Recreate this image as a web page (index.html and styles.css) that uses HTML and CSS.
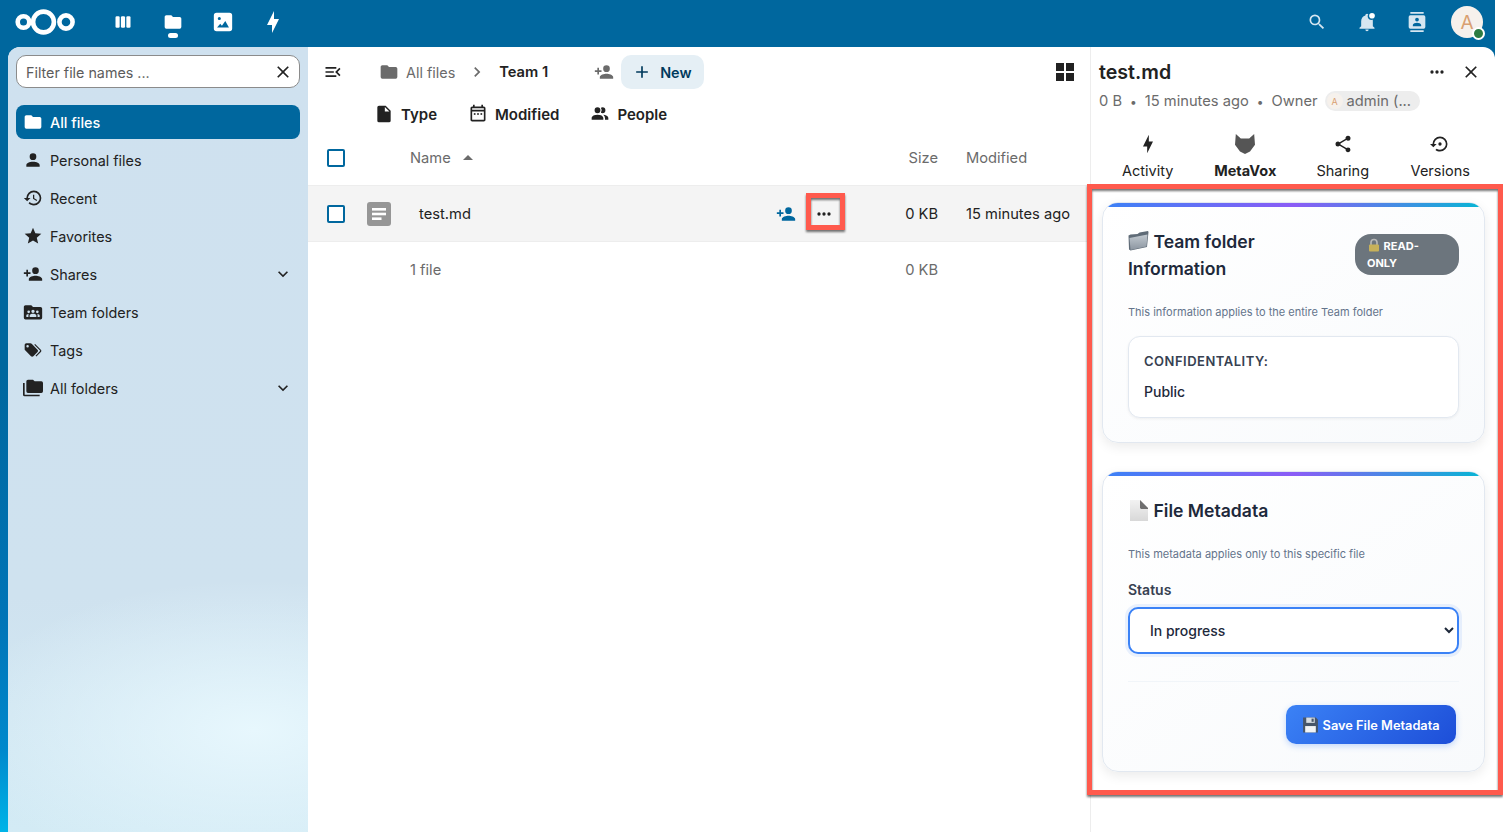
FILE: index.html
```html
<!DOCTYPE html>
<html lang="en">
<head>
<meta charset="utf-8">
<title>Files - Nextcloud</title>
<link rel="stylesheet" href="styles.css">
</head>
<body>
<svg class="sprite" aria-hidden="true">
  <defs>
    <linearGradient id="g-folder" x1="0" y1="0" x2="0" y2="1"><stop offset="0" stop-color="#c2c9d0"/><stop offset="1" stop-color="#8b95a0"/></linearGradient>
    <linearGradient id="g-file" x1="0" y1="0" x2="0" y2="1"><stop offset="0" stop-color="#f2f2f2"/><stop offset="1" stop-color="#d8d8d8"/></linearGradient>
  </defs>
  <symbol id="i-folder" viewBox="0 0 24 24"><path d="M10,4H4C2.89,4 2,4.89 2,6V18A2,2 0 0,0 4,20H20A2,2 0 0,0 22,18V8C22,6.89 21.1,6 20,6H12L10,4Z"/></symbol>
  <symbol id="i-account" viewBox="0 0 24 24"><path d="M12,4A4,4 0 0,1 16,8A4,4 0 0,1 12,12A4,4 0 0,1 8,8A4,4 0 0,1 12,4M12,14C16.42,14 20,15.79 20,18V20H4V18C4,15.79 7.58,14 12,14Z"/></symbol>
  <symbol id="i-history" viewBox="0 0 24 24"><path d="M13.5,8H12V13L16.28,15.54L17,14.33L13.5,12.25V8M13,3A9,9 0 0,0 4,12H1L4.96,16.03L9,12H6A7,7 0 0,1 13,5A7,7 0 0,1 20,12A7,7 0 0,1 13,19C11.07,19 9.32,18.21 8.06,16.94L6.64,18.36C8.27,20 10.5,21 13,21A9,9 0 0,0 22,12A9,9 0 0,0 13,3"/></symbol>
  <symbol id="i-star" viewBox="0 0 24 24"><path d="M12,17.27L18.18,21L16.54,13.97L22,9.24L14.81,8.62L12,2L9.19,8.62L2,9.24L7.45,13.97L5.82,21L12,17.27Z"/></symbol>
  <symbol id="i-share-plus" viewBox="0 0 24 24"><path d="M15,14C12.33,14 7,15.33 7,18V20H23V18C23,15.33 17.67,14 15,14M6,10V7H4V10H1V12H4V15H6V12H9V10M15,12A4,4 0 0,0 19,8A4,4 0 0,0 15,4A4,4 0 0,0 11,8A4,4 0 0,0 15,12Z"/></symbol>
  <symbol id="i-team" viewBox="0 0 24 24"><path fill-rule="evenodd" d="M10,4H3C1.9,4 1,4.9 1,6V19A2,2 0 0,0 3,21H21A2,2 0 0,0 23,19V8C23,6.9 22.1,6 21,6H12L10,4ZM12,9.2A2,2 0 1,1 12,13.2A2,2 0 1,1 12,9.2ZM6.8,10.2A1.6,1.6 0 1,1 6.8,13.4A1.6,1.6 0 1,1 6.8,10.2ZM17.2,10.2A1.6,1.6 0 1,1 17.2,13.4A1.6,1.6 0 1,1 17.2,10.2ZM8,18V16C8,14.8 10,14 12,14C14,14 16,14.8 16,16V18ZM4,18V16C4,15 5.2,14.4 6.8,14.3C6.6,14.8 6.5,15.4 6.5,16V18ZM20,18H17.5V16C17.5,15.4 17.4,14.8 17.2,14.3C18.8,14.4 20,15 20,16Z"/></symbol>
  <symbol id="i-tags" viewBox="0 0 24 24"><path d="M5.5,9A1.5,1.5 0 0,0 7,7.5A1.5,1.5 0 0,0 5.5,6A1.5,1.5 0 0,0 4,7.5A1.5,1.5 0 0,0 5.5,9M17.41,11.58C17.77,11.94 18,12.44 18,13C18,13.55 17.78,14.05 17.41,14.41L12.41,19.41C12.05,19.77 11.55,20 11,20C10.45,20 9.95,19.78 9.58,19.41L2.59,12.42C2.22,12.05 2,11.55 2,11V6C2,4.89 2.89,4 4,4H9C9.55,4 10.05,4.22 10.41,4.58L17.41,11.58M13.54,5.71L14.54,4.71L21.41,11.58C21.78,11.94 22,12.45 22,13C22,13.55 21.78,14.05 21.42,14.41L16.04,19.79L15.04,18.79L20.75,13L13.54,5.71Z"/></symbol>
  <symbol id="i-folders" viewBox="0 0 24 24"><path d="M22,4H14L12,2H6A2,2 0 0,0 4,4V16A2,2 0 0,0 6,18H22A2,2 0 0,0 24,16V6A2,2 0 0,0 22,4M2,6H0V20A2,2 0 0,0 2,22H20V20H2V6Z"/></symbol>
  <symbol id="i-chevron-down" viewBox="0 0 24 24"><path d="M7.41,8.58L12,13.17L16.59,8.58L18,10L12,16L6,10L7.41,8.58Z"/></symbol>
  <symbol id="i-chevron-right" viewBox="0 0 24 24"><path d="M8.59,16.58L13.17,12L8.59,7.41L10,6L16,12L10,18L8.59,16.58Z"/></symbol>
  <symbol id="i-close" viewBox="0 0 24 24"><path d="M19,6.41L17.59,5L12,10.59L6.41,5L5,6.41L10.59,12L5,17.59L6.41,19L12,13.41L17.59,19L19,17.59L13.41,12L19,6.41Z"/></symbol>
  <symbol id="i-flash" viewBox="0 0 24 24"><path d="M11 15H6L13 1V9H18L11 23V15Z"/></symbol>
  <symbol id="i-dots" viewBox="0 0 24 24"><path d="M16,12A2,2 0 0,1 18,10A2,2 0 0,1 20,12A2,2 0 0,1 18,14A2,2 0 0,1 16,12M10,12A2,2 0 0,1 12,10A2,2 0 0,1 14,12A2,2 0 0,1 12,14A2,2 0 0,1 10,12M4,12A2,2 0 0,1 6,10A2,2 0 0,1 8,12A2,2 0 0,1 6,14A2,2 0 0,1 4,12Z"/></symbol>
</svg>

<div class="app">
  <header class="topbar">
    <div class="topbar-left">
      <svg class="logo" viewBox="0 0 62 32"><g fill="none" stroke="#fff" stroke-width="4.6"><circle cx="9.5" cy="16" r="5.8"/><circle cx="29.5" cy="16" r="10.4"/><circle cx="52" cy="16" r="6.6"/></g></svg>
      <nav class="apps">
        <a class="app-item"><svg class="ic20 white" viewBox="0 0 24 24"><rect x="3" y="5" width="5" height="14" rx="1.5"/><rect x="9.5" y="5" width="5" height="14" rx="1.5"/><rect x="16" y="5" width="5" height="14" rx="1.5"/></svg></a>
        <a class="app-item app-active"><svg class="ic20 white"><use href="#i-folder"/></svg></a>
        <a class="app-item"><svg class="ic22 white" viewBox="0 0 24 24"><path fill-rule="evenodd" d="M5,2H19A3,3 0 0,1 22,5V19A3,3 0 0,1 19,22H5A3,3 0 0,1 2,19V5A3,3 0 0,1 5,2ZM8,6.5A1.7,1.7 0 1,0 8,9.9A1.7,1.7 0 1,0 8,6.5ZM14.5,11L10.8,16L9,13.8L5.5,18H18.5Z"/></svg></a>
        <a class="app-item"><svg class="ic24 white"><use href="#i-flash"/></svg></a>
      </nav>
    </div>
    <div class="topbar-right">
      <a class="app-item"><svg class="ic20 soft" viewBox="0 0 24 24"><path d="M9.5,3A6.5,6.5 0 0,1 16,9.5C16,11.11 15.41,12.59 14.44,13.73L14.71,14H15.5L20.5,19L19,20.5L14,15.5V14.71L13.73,14.44C12.59,15.41 11.11,16 9.5,16A6.5,6.5 0 0,1 3,9.5A6.5,6.5 0 0,1 9.5,3M9.5,5C7,5 5,7 5,9.5C5,12 7,14 9.5,14C12,14 14,12 14,9.5C14,7 12,5 9.5,5Z"/></svg></a>
      <a class="app-item"><svg class="ic20 soft" viewBox="0 0 24 24"><path d="M21,19V20H3V19L5,17V11C5,7.9 7.03,5.17 10,4.29C10,4.19 10,4.1 10,4A2,2 0 0,1 12,2C12.6,2 13.1,2.2 13.5,2.6C13,3.3 12.8,4.1 12.8,5C12.8,7.5 14.9,9.6 17.4,9.6C17.9,9.6 18.4,9.5 18.9,9.4C19,9.9 19,10.4 19,11V17L21,19M14,21A2,2 0 0,1 12,23A2,2 0 0,1 10,21"/><circle cx="18" cy="4.5" r="3.4" fill="#fff"/></svg></a>
      <a class="app-item"><svg class="ic20 soft" viewBox="0 0 24 24"><path d="M20,0H4V2H20V0M4,24H20V22H4V24M20,4H4A2,2 0 0,0 2,6V18A2,2 0 0,0 4,20H20A2,2 0 0,0 22,18V6A2,2 0 0,0 20,4M12,6.75A2.25,2.25 0 0,1 14.25,9A2.25,2.25 0 0,1 12,11.25A2.25,2.25 0 0,1 9.75,9A2.25,2.25 0 0,1 12,6.75M17,17H7V15.5C7,13.83 10.33,13 12,13C13.67,13 17,13.83 17,15.5V17Z"/></svg></a>
      <div class="avatar"><span>A</span><i class="status-dot"></i></div>
    </div>
  </header>

  <div class="workspace">
    <aside class="leftnav">
      <div class="filter">
        <span class="filter-text">Filter file names ...</span>
        <svg class="ic20 dark"><use href="#i-close"/></svg>
      </div>
      <ul class="navlist">
        <li class="navitem active"><svg class="ic20 white"><use href="#i-folder"/></svg><span>All files</span></li>
        <li class="navitem"><svg class="ic20 dark"><use href="#i-account"/></svg><span>Personal files</span></li>
        <li class="navitem"><svg class="ic20 dark"><use href="#i-history"/></svg><span>Recent</span></li>
        <li class="navitem"><svg class="ic20 dark"><use href="#i-star"/></svg><span>Favorites</span></li>
        <li class="navitem"><svg class="ic20 dark"><use href="#i-share-plus"/></svg><span>Shares</span><svg class="ic20 dark chev"><use href="#i-chevron-down"/></svg></li>
        <li class="navitem"><svg class="ic20 dark"><use href="#i-team"/></svg><span>Team folders</span></li>
        <li class="navitem"><svg class="ic20 dark"><use href="#i-tags"/></svg><span>Tags</span></li>
        <li class="navitem"><svg class="ic20 dark"><use href="#i-folders"/></svg><span>All folders</span><svg class="ic20 dark chev"><use href="#i-chevron-down"/></svg></li>
      </ul>
    </aside>

    <main class="files">
      <div class="crumbs">
        <svg class="ic20 dark toggle" viewBox="0 0 24 24"><path d="M21,15.61L19.59,17L14.58,12L19.59,7L21,8.39L17.44,12L21,15.61M3,6H16V8H3V6M3,13V11H13V13H3M3,18V16H16V18H3Z"/></svg>
        <svg class="ic20 gray crumb-folder"><use href="#i-folder"/></svg>
        <span class="crumb-root">All files</span>
        <svg class="ic20 gray crumb-sep"><use href="#i-chevron-right"/></svg>
        <span class="crumb-current">Team 1</span>
        <svg class="ic20 gray crumb-share"><use href="#i-share-plus"/></svg>
        <button class="new-btn"><svg class="ic20 navy" viewBox="0 0 24 24"><path d="M19,13H13V19H11V13H5V11H11V5H13V11H19V13Z"/></svg><span>New</span></button>
        <svg class="ic24 dark grid-toggle" viewBox="0 0 24 24"><path d="M3,11H11V3H3M3,21H11V13H3M13,21H21V13H13M13,3V11H21V3"/></svg>
      </div>
      <div class="filters">
        <span class="chip chip-type"><svg class="ic20 dark" viewBox="0 0 24 24"><path d="M13,9V3.5L18.5,9M6,2C4.89,2 4,2.89 4,4V20A2,2 0 0,0 6,22H18A2,2 0 0,0 20,20V8L14,2H6Z"/></svg>Type</span>
        <span class="chip chip-mod"><svg class="ic20 dark" viewBox="0 0 24 24"><path d="M19 3H18V1H16V3H8V1H6V3H5C3.89 3 3 3.9 3 5V19C3 20.11 3.9 21 5 21H19C20.11 21 21 20.11 21 19V5C21 3.9 20.11 3 19 3M19 19H5V9H19V19M19 7H5V5H19V7Z"/><rect x="7" y="11" width="2" height="2"/><rect x="11" y="11" width="2" height="2"/><rect x="15" y="11" width="2" height="2"/></svg>Modified</span>
        <span class="chip chip-people"><svg class="ic20 dark" viewBox="0 0 24 24"><path d="M16 17V19H2V17S2 13 9 13 16 17 16 17M12.5 7.5A3.5 3.5 0 1 0 9 11A3.5 3.5 0 0 0 12.5 7.5M15.94 13A5.32 5.32 0 0 1 18 17V19H22V17S22 13.37 15.94 13M15 4A3.39 3.39 0 0 0 13.07 4.59A5 5 0 0 1 13.07 10.41A3.39 3.39 0 0 0 15 11A3.5 3.5 0 0 0 15 4Z"/></svg>People</span>
      </div>
      <div class="row row-head">
        <span class="checkbox head-check"></span>
        <span class="col-name head-name">Name<i class="sort-caret"></i></span>
        <span class="col-size">Size</span>
        <span class="col-mod">Modified</span>
      </div>
      <div class="row row-file">
        <span class="checkbox file-check"></span>
        <svg class="file-icon" viewBox="0 0 24 24"><rect width="24" height="24" rx="3" fill="#969696"/><rect x="5" y="6" width="14" height="2.6" fill="#fff"/><rect x="5" y="10.7" width="14" height="2.6" fill="#fff"/><rect x="5" y="15.4" width="9.5" height="2.6" fill="#fff"/></svg>
        <span class="col-name file-name">test.md</span>
        <svg class="ic20 primary action-share"><use href="#i-share-plus"/></svg>
        <svg class="ic20 dark action-dots"><use href="#i-dots"/></svg>
        <span class="col-size strong">0 KB</span>
        <span class="col-mod strong">15 minutes ago</span>
      </div>
      <div class="row row-foot">
        <span class="col-name foot-name">1 file</span>
        <span class="col-size">0 KB</span>
        <span class="col-mod"></span>
      </div>
    </main>

    <aside class="details">
      <div class="details-head">
        <div class="title-row">
          <h2 class="details-title">test.md</h2>
          <svg class="ic20 dark head-dots"><use href="#i-dots"/></svg>
          <svg class="ic20 dark head-close"><use href="#i-close"/></svg>
        </div>
        <div class="meta-row">
          <span>0 B</span><b class="sep">•</b><span>15 minutes ago</span><b class="sep">•</b><span>Owner</span>
          <span class="owner"><i class="owner-avatar">A</i>admin (...</span>
        </div>
        <div class="tabs">
          <div class="tab"><svg class="ic20 dark"><use href="#i-flash"/></svg><span>Activity</span></div>
          <div class="tab tab-active"><svg class="ic20 fox" viewBox="0 0 24 24"><path d="M1,0L7,5.5H17L23,0L24,13L18,21L12,24L6,21L0,13Z"/></svg><span>MetaVox</span></div>
          <div class="tab"><svg class="ic20 dark" viewBox="0 0 24 24"><path d="M18,16.08C17.24,16.08 16.56,16.38 16.04,16.85L8.91,12.7C8.96,12.47 9,12.24 9,12C9,11.76 8.96,11.53 8.91,11.3L15.96,7.19C16.5,7.69 17.21,8 18,8A3,3 0 0,0 21,5A3,3 0 0,0 18,2A3,3 0 0,0 15,5C15,5.24 15.04,5.47 15.09,5.7L8.04,9.81C7.5,9.31 6.79,9 6,9A3,3 0 0,0 3,12A3,3 0 0,0 6,15C6.79,15 7.5,14.69 8.04,14.19L15.16,18.34C15.11,18.55 15.08,18.77 15.08,19C15.08,20.61 16.39,21.91 18,21.91C19.61,21.91 20.92,20.61 20.92,19A2.92,2.92 0 0,0 18,16.08Z"/></svg><span>Sharing</span></div>
          <div class="tab"><svg class="ic20 dark" viewBox="0 0 24 24"><path d="M12,3A9,9 0 0,0 3,12H0L4,16L8,12H5A7,7 0 0,1 12,5A7,7 0 0,1 19,12A7,7 0 0,1 12,19C10.5,19 9.09,18.5 7.94,17.7L6.5,19.14C8.04,20.3 9.94,21 12,21A9,9 0 0,0 21,12A9,9 0 0,0 12,3M14,12A2,2 0 0,0 12,10A2,2 0 0,0 10,12A2,2 0 0,0 12,14A2,2 0 0,0 14,12Z"/></svg><span>Versions</span></div>
        </div>
      </div>

      <div class="details-body">
        <section class="card card-team">
          <div class="card-head">
            <h3 class="card-title"><svg class="emoji" viewBox="0 0 20 20"><path d="M0,4.5L2,3.5L9,3L11,1.5L19.5,0L20,1L18.5,16L2,19.5L0.5,18.5Z" fill="#5f6b77"/><path d="M1,7L19,3.5L18,15.5L2,19Z" fill="url(#g-folder)"/></svg> Team folder Information</h3>
            <span class="badge"><svg class="emoji-sm" viewBox="0 0 14 14"><path d="M4,7V4.5A3,3 0 0,1 10,4.5V7" fill="none" stroke="#b9b9b9" stroke-width="1.6"/><rect x="2" y="6.5" width="10" height="7" rx="1" fill="#c7b15a"/></svg> READ-ONLY</span>
          </div>
          <p class="card-desc">This information applies to the entire Team folder</p>
          <div class="info-box">
            <div class="info-label">Confidentality:</div>
            <div class="info-value">Public</div>
          </div>
        </section>

        <section class="card card-file">
          <div class="card-head">
            <h3 class="card-title"><svg class="emoji emoji-tall" viewBox="0 0 18 21"><path d="M0,0H10L18,8V21H0Z" fill="url(#g-file)"/><path d="M10,0L18,8L18,9H11L10,8Z" fill="#6f6f6f"/></svg> File Metadata</h3>
          </div>
          <p class="card-desc file-desc">This metadata applies only to this specific file</p>
          <label class="field-label" for="status">Status</label>
          <select class="field-select" id="status"><option>In progress</option></select>
          <div class="card-foot">
            <button class="save-btn"><svg class="emoji-md" viewBox="0 0 16 16"><path d="M1,1H13L15,3V15H1Z" fill="#47566a"/><rect x="4" y="1" width="8" height="5" fill="#d7dde3"/><rect x="9" y="2" width="2" height="3" fill="#47566a"/><rect x="3" y="9" width="10" height="6" fill="#f2f4f6"/></svg> Save File Metadata</button>
          </div>
        </section>
      </div>
    </aside>
  </div>
</div>

<div class="callout callout-dots"></div>
<div class="callout callout-panel"></div>
</body>
</html>
```

FILE: styles.css
```css
* { box-sizing: border-box; }
html, body { margin: 0; padding: 0; height: 832px; overflow: hidden; background: #fff; }
body { font-family: Inter, "Liberation Sans", sans-serif; font-size: 14.7px; color: #222; position: relative; }
.sprite { position: absolute; width: 0; height: 0; }
ul { list-style: none; margin: 0; padding: 0; }
h2, h3, p { margin: 0; }

.ic20 { width: 20px; height: 20px; flex: none; }
.ic22 { width: 22px; height: 22px; flex: none; }
.ic24 { width: 24px; height: 24px; flex: none; }
.white { fill: #fff; }
.soft { fill: #d5e6f1; }
.dark { fill: #222; }
.gray { fill: #6b6b6b; }
.navy { fill: #003a5c; }
.primary { fill: #00679e; }
.fox { fill: #555; }

.app {
  width: 1495px; height: 832px; display: flex; flex-direction: column;
  background: linear-gradient(180deg, #00679e 0, #00679e 45%, #0075b8 75%, #0088cc 90%, #00b4e8 100%);
}

/* top bar */
.topbar { height: 47px; flex: none; display: flex; justify-content: space-between; align-items: flex-start; }
.topbar-left { display: flex; align-items: flex-start; }
.logo { width: 62px; height: 32px; margin: 6px 22px 0 14px; }
.apps { display: flex; }
.app-item { width: 50px; height: 44px; display: flex; align-items: center; justify-content: center; position: relative; }
.app-active::after { content: ""; position: absolute; left: 20px; top: 33px; width: 10px; height: 5px; border-radius: 3px; background: #fff; }
.topbar-right { display: flex; align-items: flex-start; padding-right: 12px; }
.avatar {
  width: 32px; height: 32px; border-radius: 50%; background: #f6f1ec; color: #d9a071; margin: 6px 0 0 9px;
  font-size: 19px; display: flex; align-items: center; justify-content: center; position: relative;
}
.status-dot { position: absolute; right: -2px; bottom: -2px; width: 13px; height: 13px; border-radius: 50%; background: #2d7b41; border: 2px solid #fff; }

.workspace { flex: 1; display: flex; min-height: 0; margin-left: 8px; background: #fff; border-radius: 12px 12px 0 0; overflow: hidden; }

/* left navigation */
.leftnav {
  width: 300px; flex: none; padding: 8px;
  background:
    radial-gradient(ellipse 300px 150px at 82% 87%, #e7f7fd 0, rgba(231,247,253,0) 100%),
    linear-gradient(180deg, #cfe1ef 0, #cfe2ef 70%, #d3ebf5 100%);
}
.filter { height: 33px; display: flex; align-items: center; justify-content: space-between; background: #fff; border: 1px solid #8b8b8b; border-radius: 10px; padding: 1px 6px 0 9px; }
.filter-text { color: #5c5c5c; font-size: 14.3px; }
.navlist { margin-top: 17px; display: flex; flex-direction: column; gap: 4px; }
.navitem { height: 34px; display: flex; align-items: center; padding: 0 7px; gap: 7px; border-radius: 8px; font-size: 14.4px; color: #222; }
.navitem.active { background: #00679e; color: #fff; font-weight: 500; }
.chev { margin-left: auto; }

/* file list */
.files { flex: 1; min-width: 0; display: flex; flex-direction: column; }
.crumbs { height: 50px; display: flex; align-items: center; padding-left: 15px; flex: none; }
.toggle { margin-right: 28px; }
.crumb-folder { margin-right: 7px; margin-left: 8px; }
.crumb-root { color: #6b6b6b; font-size: 14.4px; }
.crumb-sep { margin: 0 12px 0 12px; }
.crumb-current { font-weight: 600; font-size: 14.7px; color: #222; }
.crumb-share { margin-left: 46px; }
.new-btn {
  margin-left: 7px; width: 83px; height: 34px; border: 0; border-radius: 10px; background: #e5eff5; color: #003a5c;
  font: 600 14.4px Inter, sans-serif; display: flex; align-items: center; padding: 0 0 0 11px; gap: 8px;
}
.grid-toggle { margin-left: auto; margin-right: 13px; }
.filters { height: 34px; flex: none; display: flex; align-items: center; }
.chip { display: flex; align-items: center; gap: 7px; font-weight: 600; font-size: 15px; }
.chip-type { margin-left: 66px; }
.chip-mod { margin-left: 31px; }
.chip-people { margin-left: 31px; }

.row { display: flex; align-items: center; padding-left: 19px; flex: none; font-size: 14.7px; }
.row-head { height: 55px; border-bottom: 1px solid #ededed; color: #6b6b6b; }
.row-file { height: 56px; background: #f4f4f4; border-bottom: 1px solid #ededed; color: #222; }
.row-foot { height: 56px; color: #6b6b6b; }
.checkbox { width: 18px; height: 18px; border: 2px solid #00679e; border-radius: 2px; flex: none; background: #fff; }
.head-check { margin-right: 65px; }
.file-check { margin-right: 22px; }
.file-icon { width: 24px; height: 24px; flex: none; margin-right: 28px; }
.foot-name { margin-left: 83px; }
.col-name { flex: 1; min-width: 0; }
.head-name { display: flex; align-items: center; }
.sort-caret { width: 0; height: 0; margin-left: 12px; margin-bottom: 2px; border: 5px solid transparent; border-top: 0; border-bottom: 5px solid #6b6b6b; }
.col-size { width: 80px; text-align: right; flex: none; }
.col-mod { width: 124px; margin-left: 28px; flex: none; white-space: nowrap; }
.action-share { margin-right: 18px; }
.action-dots { margin-right: 24px; }

/* details */
.details { width: 405px; flex: none; border-left: 1px solid #ededed; display: flex; flex-direction: column; }
.details-head { height: 137px; flex: none; padding: 0 0 0 8px; }
.title-row { height: 50px; display: flex; align-items: center; }
.details-title { font-size: 19.6px; font-weight: 600; color: #222; }
.head-dots { margin-left: auto; margin-right: 14px; }
.head-close { margin-right: 14px; }
.meta-row { height: 18px; margin-top: -5px; display: flex; align-items: center; color: #6b6b6b; font-size: 14.7px; }
.sep { font-weight: 400; font-size: 12px; margin: 0 8px; }
.owner { margin-left: 7px; width: 95px; height: 20px; border-radius: 10px; background: #ededed; display: flex; align-items: center; white-space: nowrap; }
.owner-avatar { width: 16px; height: 16px; border-radius: 50%; background: #f6f1ec; color: #d9a071; font-size: 9px; font-style: normal; display: flex; align-items: center; justify-content: center; margin: 0 4px 0 2px; }
.tabs { display: flex; margin-top: 24px; width: 390px; }
.tab { width: 97.5px; display: flex; flex-direction: column; align-items: center; height: 48px; font-size: 14.5px; color: #222; gap: 8px; }
.tab-active { font-weight: 700; color: #222; }

.details-body { flex: 1; padding: 18px 10px 0 11px; display: flex; flex-direction: column; gap: 29px; }
.card {
  position: relative; overflow: hidden; border: 1px solid #e2e8f0; border-radius: 16px; padding: 25px;
  background: linear-gradient(145deg, #fff 0, #f8fafc 100%); box-shadow: 0 4px 12px rgba(0,0,0,.08);
}
.card::before { content: ""; position: absolute; left: 0; right: 0; top: 0; height: 4px; background: linear-gradient(90deg, #3b82f6, #8b5cf6 50%, #06b6d4); }
.card-team { height: 241px; flex: none; }
.card-file { height: 301px; flex: none; margin-top: -1px; }
.card-head { display: flex; justify-content: space-between; align-items: center; }
.card-title { font-size: 17.6px; line-height: 27px; font-weight: 600; color: #1e293b; max-width: 190px; }
.emoji { width: 21px; height: 20px; vertical-align: -3px; }
.emoji-tall { width: 18px; height: 21px; margin-left: 2px; margin-right: 1px; vertical-align: -4px; }
.emoji-sm { width: 14px; height: 14px; vertical-align: -2px; }
.emoji-md { width: 17px; height: 18px; vertical-align: -4px; }
.badge { width: 104px; height: 41px; margin-top: -2px; background: #6c757d; color: #fff; font-size: 11px; font-weight: 700; line-height: 17px; padding: 4px 12px; border-radius: 16px; }
.card-desc { font-size: 11px; line-height: 16px; color: #64748b; margin-top: 22px; }
.file-desc { margin-top: 22px; }
.info-box { margin-top: 16px; height: 82px; padding: 14px 15px; background: #fff; border: 1px solid #e2e8f0; border-radius: 12px; box-shadow: 0 1px 3px rgba(0,0,0,.06); }
.info-label { font-size: 13px; font-weight: 600; line-height: 20px; text-transform: uppercase; letter-spacing: .5px; color: #374151; }
.info-value { font-size: 14px; font-weight: 500; line-height: 20px; color: #1e293b; margin-top: 11px; }
.field-label { display: block; font-size: 14px; font-weight: 600; line-height: 20px; color: #374151; margin-top: 18px; }
.field-select {
  display: block; width: 331px; height: 47px; margin-top: 7px; padding: 0 16px; font: 500 14px Inter, sans-serif; color: #1e293b;
  background: #fff; border: 2px solid #3b82f6; border-radius: 10px; box-shadow: 0 0 0 3px rgba(59,130,246,.1); outline: 0;
}
.card-foot { margin-top: 27px; border-top: 1px solid #f1f5f9; padding-top: 23px; display: flex; justify-content: flex-end; padding-right: 3px; }
.save-btn {
  width: 170px; height: 39px; border: 0; border-radius: 10px; color: #fff; font: 600 12.8px Inter, sans-serif; padding: 0;
  background: linear-gradient(135deg, #3b82f6, #1d4ed8); box-shadow: 0 2px 6px rgba(59,130,246,.3);
}

/* annotations drawn over the screenshot */
.callout { position: absolute; border: 5px solid #ff5a4d; filter: drop-shadow(0 2px 1px rgba(0,0,0,.55)); }
.callout-dots { left: 806px; top: 193px; width: 39px; height: 37px; }
.callout-panel { left: 1087px; top: 184px; width: 416px; height: 611px; }
```
